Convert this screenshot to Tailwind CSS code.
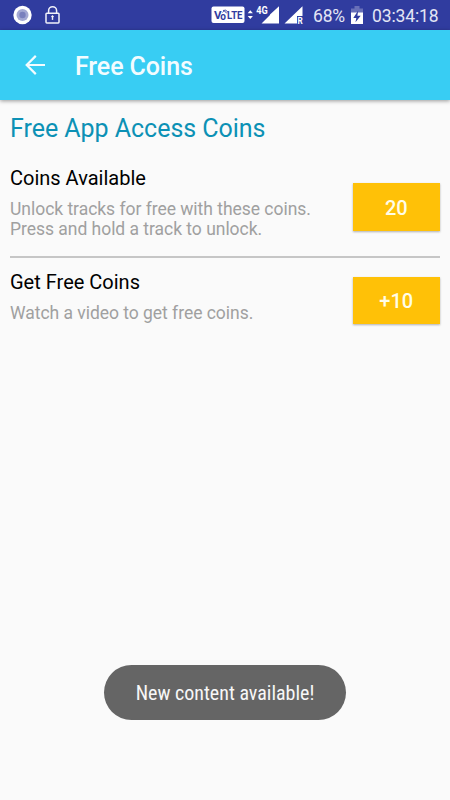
<!DOCTYPE html>
<html lang="en">
<head>
<meta charset="utf-8">
<title>Free Coins</title>
<script src="https://cdn.jsdelivr.net/npm/@tailwindcss/browser@4"></script>
</head>
<body class="relative flex h-[800px] w-[450px] flex-col overflow-hidden bg-[#fafafa] font-['Roboto',sans-serif] whitespace-nowrap">
<div class="flex h-[30px] shrink-0 items-center bg-[#303c9f] text-[17.5px] leading-[30px] text-[#e3e5f5]">
  <svg class="ml-[13px] size-5" viewBox="0 0 20 20"><circle cx="9.5" cy="10" r="9.2" fill="#fff"/><circle cx="9.5" cy="10" r="6" fill="#a3a8d3"/><circle cx="9.5" cy="10" r="3.2" fill="#7980bd"/></svg>
  <svg class="ml-3 h-5 w-4" viewBox="0 0 16 20" fill="none" stroke="#f0f1fa"><rect x="1" y="8.3" width="13" height="9.6" rx=".8" stroke-width="1.5"/><path d="M3.6 8V5.7a4 4 0 0 1 8 0V8" stroke-width="1.5"/><path d="M7.5 11.3v3.6" stroke-width="1.4"/><circle cx="7.5" cy="11.5" r=".8" fill="#fff"/></svg>
  <svg class="ml-[150px] h-[30px] w-[94px]" viewBox="211 0 94 30" fill="#fff" font-family="Roboto" font-weight="700">
    <rect x="211.5" y="6.5" width="33" height="16.5" rx="2"/>
    <g fill="#303c9f" font-size="11"><text x="214" y="19" textLength="7.5" lengthAdjust="spacingAndGlyphs">V</text><text x="220.3" y="19.5" font-size="10">o</text><text x="227" y="19" textLength="15.5" lengthAdjust="spacingAndGlyphs">LTE</text></g>
    <path d="M222.5 12.3q2.5-2.6 4 1M223 10.5q3-1.5 5 1.7" fill="none" stroke="#303c9f" stroke-width=".9"/>
    <path d="m247.7 13.3 2.6-3 2.6 3zM247.7 16l2.6 3 2.6-3z"/>
    <text x="256.3" y="14" font-size="10.5" textLength="11.5" lengthAdjust="spacingAndGlyphs">4G</text>
    <path d="M279 6.3V23.5H261.5L270 15V14.5ZM302.5 6.3V16H297V23.5H284.5Z"/>
    <text x="297.5" y="23.5" font-size="8.5" textLength="5.2" lengthAdjust="spacingAndGlyphs">R</text>
  </svg>
  <span class="ml-2 w-[33px] translate-y-px tracking-[-0.2px]">68%</span>
  <svg class="ml-[5px] h-[19px] w-3" viewBox="0 0 12 19"><path d="M0 2.5h3.5V0h5v2.5H12V9H0z" fill="#6870b8"/><path d="M0 6.5h12v11.5H0z" fill="#fff"/><path d="M7.2 4.5 2.3 12h3L4.5 16.3 9.7 9.7H6.4z" fill="#303c9f"/></svg>
  <span class="ml-[9px] translate-y-px tracking-[-0.12px]">03:34:18</span>
</div>
<header class="relative z-10 flex h-[70px] shrink-0 items-center bg-[#38cdf3] shadow-[0_1px_4px_rgba(0,0,0,0.4)]">
  <svg class="ml-[25px] h-5 w-5" viewBox="0 0 20 20" fill="none" stroke="#f3fcff" stroke-width="2.2"><path d="M20 10H2M10.8 .9 1.7 10l9.1 9.1"/></svg>
  <h1 class="ml-[30px] translate-y-[1.5px] text-[25px] leading-[30px] font-medium tracking-[-0.1px] text-[#f3fcff]">Free Coins</h1>
</header>
<main class="px-2.5">
  <h2 class="mt-[14px] text-[25px] leading-[30px] tracking-[-0.03px] text-[#0c91b5]">Free App Access Coins</h2>
  <section class="flex h-[114px] justify-between border-b-2 border-[#c6c6c6] pt-[22px]">
    <div>
      <h3 class="text-[20px] leading-6 text-black">Coins Available</h3>
      <p class="mt-[9px] text-[17.5px] leading-5 tracking-[-0.03px] text-[#a0a0a0]">Unlock tracks for free with these coins.<br>Press and hold a track to unlock.</p>
    </div>
    <button class="mt-[17px] h-[47.5px] w-[87.5px] bg-[#ffc107] pt-0.5 text-[20px] font-medium text-[#fffde8] shadow-[0_1px_2px_rgba(0,0,0,0.3)]">20</button>
  </section>
  <section class="flex justify-between pt-[12px]">
    <div>
      <h3 class="text-[20px] leading-6 text-black">Get Free Coins</h3>
      <p class="mt-[9px] text-[17.5px] leading-5 tracking-[-0.03px] text-[#a0a0a0]">Watch a video to get free coins.</p>
    </div>
    <button class="mt-[6.5px] h-[47.5px] w-[87.5px] bg-[#ffc107] pt-0.5 text-[20px] font-medium text-[#fffde8] shadow-[0_1px_2px_rgba(0,0,0,0.3)]">+10</button>
  </section>
</main>
<div class="absolute top-[664.5px] left-[104px] flex h-[55.5px] w-[242px] items-center justify-center rounded-full bg-[#656565] text-[20px] text-[#f7f7f7]"><span class="translate-y-px font-['Roboto_Condensed','Roboto',sans-serif]">New content available!</span></div>
</body>
</html>
